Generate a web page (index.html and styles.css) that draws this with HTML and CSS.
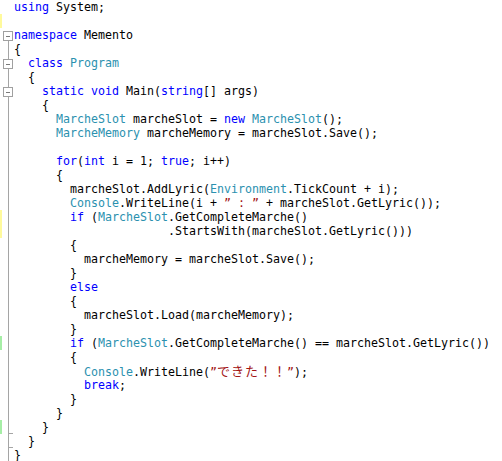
FILE: index.html
```html
<!DOCTYPE html>
<html lang="ja">
<head>
<meta charset="utf-8">
<title>Memento</title>
<link rel="stylesheet" href="styles.css">
</head>
<body>
<div class="editor">
  <div class="ln"><span class="g"></span><span class="c"><span class="k">using</span> System;</span></div>
  <div class="ln"><span class="g yel"></span><span class="c"></span></div>
  <div class="ln"><span class="g vl first"><span class="box"></span></span><span class="c"><span class="k">namespace</span> Memento</span></div>
  <div class="ln"><span class="g vl"></span><span class="c">{</span></div>
  <div class="ln"><span class="g vl"><span class="box"></span></span><span class="c">  <span class="k">class</span> <span class="t">Program</span></span></div>
  <div class="ln"><span class="g vl"></span><span class="c">  {</span></div>
  <div class="ln"><span class="g vl"><span class="box"></span></span><span class="c">    <span class="k">static</span> <span class="k">void</span> Main(<span class="k">string</span>[] args)</span></div>
  <div class="ln"><span class="g vl"></span><span class="c">    {</span></div>
  <div class="ln"><span class="g vl"></span><span class="c">      <span class="t">MarcheSlot</span> marcheSlot = <span class="k">new</span> <span class="t">MarcheSlot</span>();</span></div>
  <div class="ln"><span class="g vl"></span><span class="c">      <span class="t">MarcheMemory</span> marcheMemory = marcheSlot.Save();</span></div>
  <div class="ln"><span class="g vl"></span><span class="c"></span></div>
  <div class="ln"><span class="g vl"></span><span class="c">      <span class="k">for</span>(<span class="k">int</span> i = 1; <span class="k">true</span>; i++)</span></div>
  <div class="ln"><span class="g vl"></span><span class="c">      {</span></div>
  <div class="ln"><span class="g vl"></span><span class="c">        marcheSlot.AddLyric(<span class="t">Environment</span>.TickCount + i);</span></div>
  <div class="ln"><span class="g vl"></span><span class="c">        <span class="t">Console</span>.WriteLine(i + <span class="s">” : ”</span> + marcheSlot.GetLyric());</span></div>
  <div class="ln"><span class="g vl yel"></span><span class="c">        <span class="k">if</span> (<span class="t">MarcheSlot</span>.GetCompleteMarche()</span></div>
  <div class="ln"><span class="g vl yel"></span><span class="c">                      .StartsWith(marcheSlot.GetLyric()))</span></div>
  <div class="ln"><span class="g vl"></span><span class="c">        {</span></div>
  <div class="ln"><span class="g vl"></span><span class="c">          marcheMemory = marcheSlot.Save();</span></div>
  <div class="ln"><span class="g vl"></span><span class="c">        }</span></div>
  <div class="ln"><span class="g vl"></span><span class="c">        <span class="k">else</span></span></div>
  <div class="ln"><span class="g vl"></span><span class="c">        {</span></div>
  <div class="ln"><span class="g vl"></span><span class="c">          marcheSlot.Load(marcheMemory);</span></div>
  <div class="ln"><span class="g vl"></span><span class="c">        }</span></div>
  <div class="ln"><span class="g vl grn"></span><span class="c">        <span class="k">if</span> (<span class="t">MarcheSlot</span>.GetCompleteMarche() == marcheSlot.GetLyric())</span></div>
  <div class="ln"><span class="g vl"></span><span class="c">        {</span></div>
  <div class="ln"><span class="g vl"></span><span class="c">          <span class="t">Console</span>.WriteLine(<span class="s">”<span class="ja">できた！！</span>”</span>);</span></div>
  <div class="ln"><span class="g vl"></span><span class="c">          <span class="k">break</span>;</span></div>
  <div class="ln"><span class="g vl"></span><span class="c">        }</span></div>
  <div class="ln"><span class="g vl"></span><span class="c">      }</span></div>
  <div class="ln"><span class="g vl grn end"></span><span class="c">    }</span></div>
  <div class="ln"><span class="g vl end"></span><span class="c">  }</span></div>
  <div class="ln"><span class="g vl"></span><span class="c">}</span></div>
</div>
</body>
</html>
```

FILE: styles.css
```css
html, body {
  margin: 0;
  padding: 0;
  background: #ffffff;
}

.editor {
  display: flex;
  flex-direction: column;
  font-family: "DejaVu Sans Mono", "Liberation Mono", monospace;
  font-size: 11.63px;
  line-height: 14px;
  color: #000000;
}

.ln {
  display: flex;
  height: 14px;
}

.g {
  flex: 0 0 14px;
  height: 14px;
  --chg: none;
  --tick: none;
  --vl: none;
  --vl-top: 0px;
  background-image: var(--chg), var(--tick), var(--vl);
  background-repeat: no-repeat;
  background-position: 0 0, 8px 13px, 8px var(--vl-top);
  background-size: 2px 14px, 5px 1px, 1px 14px;
}

.vl { --vl: linear-gradient(#a5a5a5, #a5a5a5); }
.first { --vl-top: 12px; }
.yel { --chg: linear-gradient(#fffa9c, #fffa9c); }
.grn { --chg: linear-gradient(#a6eea6, #a6eea6); }
.end { --tick: linear-gradient(#a5a5a5, #a5a5a5); }

.box {
  display: block;
  box-sizing: border-box;
  width: 10px;
  height: 10px;
  margin: 3px 0 0 3px;
  border: 1px solid #a0a0a0;
  background: linear-gradient(#7a7a7a, #7a7a7a) center / 4px 1px no-repeat, #ffffff;
}

.c {
  white-space: pre;
  line-height: 14px;
}

.k { color: #0000ff; }
.t { color: #2b91af; }
.s { color: #a31515; }

.ja {
  font-family: "Noto Sans CJK JP", sans-serif;
  font-size: 13px;
  letter-spacing: 1px;
  line-height: 14px;
}
```
